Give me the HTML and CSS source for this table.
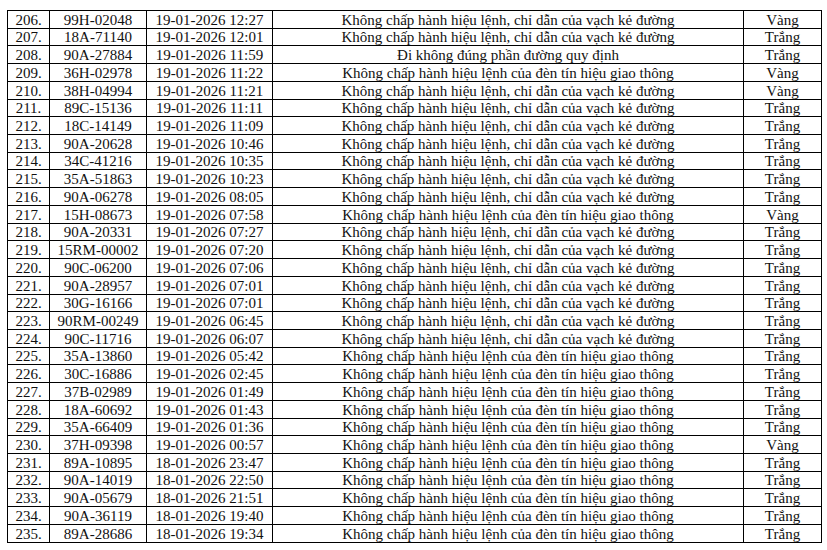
FILE: index.html
```html
<!DOCTYPE html>
<html lang="vi">
<head>
<meta charset="utf-8">
<link rel="stylesheet" href="styles.css">
</head>
<body>
<table class="list">
<colgroup><col class="c-no"><col class="c-plate"><col class="c-time"><col class="c-act"><col class="c-color"></colgroup>
<tbody>
<tr><td>206.</td><td>99H-02048</td><td>19-01-2026 12:27</td><td>Không chấp hành hiệu lệnh, chỉ dẫn của vạch kẻ đường</td><td>Vàng</td></tr>
<tr><td>207.</td><td>18A-71140</td><td>19-01-2026 12:01</td><td>Không chấp hành hiệu lệnh, chỉ dẫn của vạch kẻ đường</td><td>Trắng</td></tr>
<tr><td>208.</td><td>90A-27884</td><td>19-01-2026 11:59</td><td>Đi không đúng phần đường quy định</td><td>Trắng</td></tr>
<tr><td>209.</td><td>36H-02978</td><td>19-01-2026 11:22</td><td>Không chấp hành hiệu lệnh của đèn tín hiệu giao thông</td><td>Vàng</td></tr>
<tr><td>210.</td><td>38H-04994</td><td>19-01-2026 11:21</td><td>Không chấp hành hiệu lệnh, chỉ dẫn của vạch kẻ đường</td><td>Vàng</td></tr>
<tr><td>211.</td><td>89C-15136</td><td>19-01-2026 11:11</td><td>Không chấp hành hiệu lệnh, chỉ dẫn của vạch kẻ đường</td><td>Trắng</td></tr>
<tr><td>212.</td><td>18C-14149</td><td>19-01-2026 11:09</td><td>Không chấp hành hiệu lệnh, chỉ dẫn của vạch kẻ đường</td><td>Trắng</td></tr>
<tr><td>213.</td><td>90A-20628</td><td>19-01-2026 10:46</td><td>Không chấp hành hiệu lệnh, chỉ dẫn của vạch kẻ đường</td><td>Trắng</td></tr>
<tr><td>214.</td><td>34C-41216</td><td>19-01-2026 10:35</td><td>Không chấp hành hiệu lệnh, chỉ dẫn của vạch kẻ đường</td><td>Trắng</td></tr>
<tr><td>215.</td><td>35A-51863</td><td>19-01-2026 10:23</td><td>Không chấp hành hiệu lệnh, chỉ dẫn của vạch kẻ đường</td><td>Trắng</td></tr>
<tr><td>216.</td><td>90A-06278</td><td>19-01-2026 08:05</td><td>Không chấp hành hiệu lệnh, chỉ dẫn của vạch kẻ đường</td><td>Trắng</td></tr>
<tr><td>217.</td><td>15H-08673</td><td>19-01-2026 07:58</td><td>Không chấp hành hiệu lệnh của đèn tín hiệu giao thông</td><td>Vàng</td></tr>
<tr><td>218.</td><td>90A-20331</td><td>19-01-2026 07:27</td><td>Không chấp hành hiệu lệnh, chỉ dẫn của vạch kẻ đường</td><td>Trắng</td></tr>
<tr><td>219.</td><td>15RM-00002</td><td>19-01-2026 07:20</td><td>Không chấp hành hiệu lệnh, chỉ dẫn của vạch kẻ đường</td><td>Trắng</td></tr>
<tr><td>220.</td><td>90C-06200</td><td>19-01-2026 07:06</td><td>Không chấp hành hiệu lệnh, chỉ dẫn của vạch kẻ đường</td><td>Trắng</td></tr>
<tr><td>221.</td><td>90A-28957</td><td>19-01-2026 07:01</td><td>Không chấp hành hiệu lệnh, chỉ dẫn của vạch kẻ đường</td><td>Trắng</td></tr>
<tr><td>222.</td><td>30G-16166</td><td>19-01-2026 07:01</td><td>Không chấp hành hiệu lệnh, chỉ dẫn của vạch kẻ đường</td><td>Trắng</td></tr>
<tr><td>223.</td><td>90RM-00249</td><td>19-01-2026 06:45</td><td>Không chấp hành hiệu lệnh, chỉ dẫn của vạch kẻ đường</td><td>Trắng</td></tr>
<tr><td>224.</td><td>90C-11716</td><td>19-01-2026 06:07</td><td>Không chấp hành hiệu lệnh, chỉ dẫn của vạch kẻ đường</td><td>Trắng</td></tr>
<tr><td>225.</td><td>35A-13860</td><td>19-01-2026 05:42</td><td>Không chấp hành hiệu lệnh của đèn tín hiệu giao thông</td><td>Trắng</td></tr>
<tr><td>226.</td><td>30C-16886</td><td>19-01-2026 02:45</td><td>Không chấp hành hiệu lệnh của đèn tín hiệu giao thông</td><td>Trắng</td></tr>
<tr><td>227.</td><td>37B-02989</td><td>19-01-2026 01:49</td><td>Không chấp hành hiệu lệnh của đèn tín hiệu giao thông</td><td>Trắng</td></tr>
<tr><td>228.</td><td>18A-60692</td><td>19-01-2026 01:43</td><td>Không chấp hành hiệu lệnh của đèn tín hiệu giao thông</td><td>Trắng</td></tr>
<tr><td>229.</td><td>35A-66409</td><td>19-01-2026 01:36</td><td>Không chấp hành hiệu lệnh của đèn tín hiệu giao thông</td><td>Trắng</td></tr>
<tr><td>230.</td><td>37H-09398</td><td>19-01-2026 00:57</td><td>Không chấp hành hiệu lệnh của đèn tín hiệu giao thông</td><td>Vàng</td></tr>
<tr><td>231.</td><td>89A-10895</td><td>18-01-2026 23:47</td><td>Không chấp hành hiệu lệnh của đèn tín hiệu giao thông</td><td>Trắng</td></tr>
<tr><td>232.</td><td>90A-14019</td><td>18-01-2026 22:50</td><td>Không chấp hành hiệu lệnh của đèn tín hiệu giao thông</td><td>Trắng</td></tr>
<tr><td>233.</td><td>90A-05679</td><td>18-01-2026 21:51</td><td>Không chấp hành hiệu lệnh của đèn tín hiệu giao thông</td><td>Trắng</td></tr>
<tr><td>234.</td><td>90A-36119</td><td>18-01-2026 19:40</td><td>Không chấp hành hiệu lệnh của đèn tín hiệu giao thông</td><td>Trắng</td></tr>
<tr><td>235.</td><td>89A-28686</td><td>18-01-2026 19:34</td><td>Không chấp hành hiệu lệnh của đèn tín hiệu giao thông</td><td>Trắng</td></tr>
</tbody>
</table>
</body>
</html>
```

FILE: styles.css
```css
html, body {
  margin: 0;
  padding: 0;
  background: #ffffff;
}
body {
  padding: 10px 0 0 7px;
  font-family: "Liberation Serif", "Times New Roman", serif;
  color: #111111;
}
.list {
  border-collapse: collapse;
  table-layout: fixed;
  width: 814px;
  height: 533px;
  font-size: 15px;
  line-height: 15px;
}
.c-no { width: 42px; }
.c-plate { width: 97px; }
.c-time { width: 126px; }
.c-act { width: 471px; }
.c-color { width: 78px; }
.list td {
  border: 1px solid #000000;
  padding: 0;
  text-align: center;
  vertical-align: bottom;
  white-space: nowrap;
  overflow: hidden;
}
```
